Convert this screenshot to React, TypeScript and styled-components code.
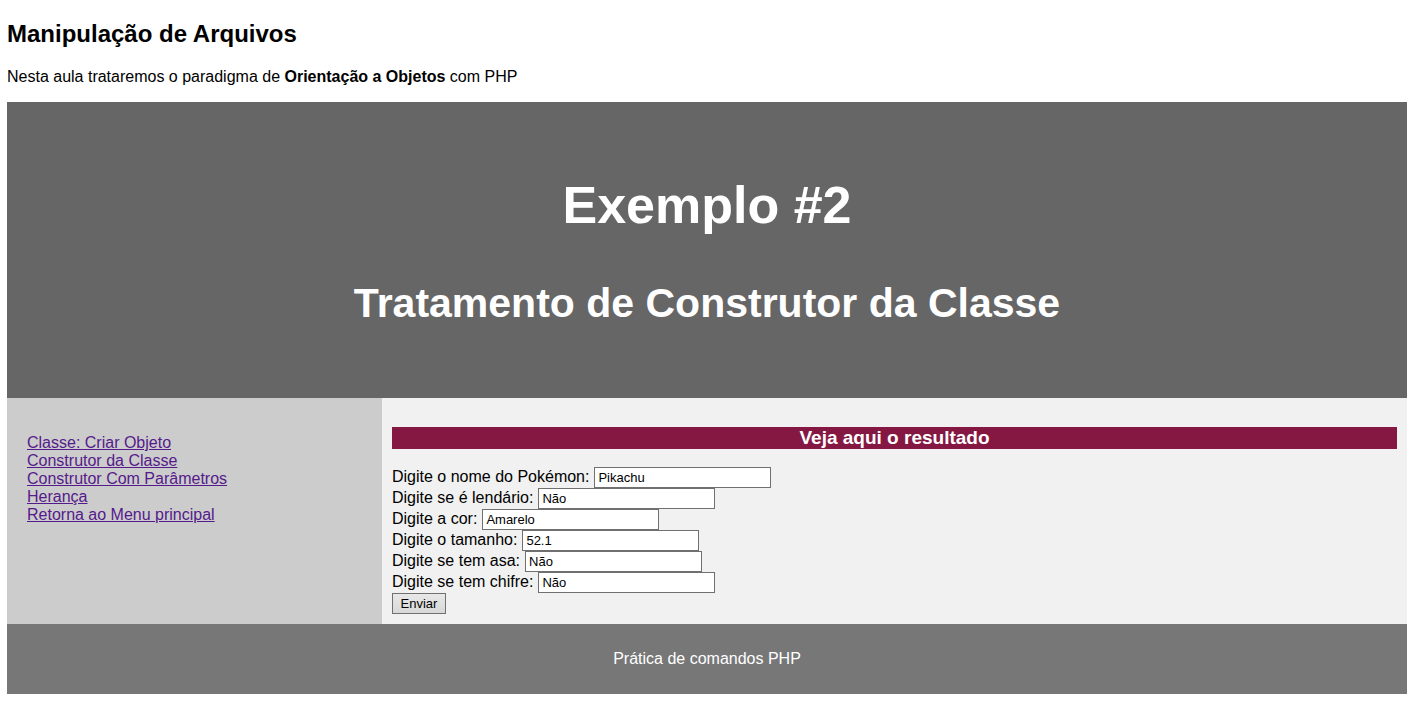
import React from "react";
import styled, { createGlobalStyle } from "styled-components";

const GlobalStyle = createGlobalStyle`
  * { box-sizing: border-box; }
  body {
    margin: 0;
    padding: 0 5px 0 7px;
    background: #fff;
    color: #000;
    font: 16px/18px "Liberation Sans", Arial, Helvetica, sans-serif;
  }
`;

const PageTitle = styled.h2`
  margin: 20px 0;
  font-size: 24px;
  line-height: 28px;
`;

const Intro = styled.p`
  margin: 0 0 16px;
`;

const Banner = styled.header`
  padding: 65px 30px 67px;
  background: #666;
  color: #fff;
  text-align: center;
`;

const BannerTitle = styled.h1`
  margin: 0 0 32px;
  font-size: 52px;
  line-height: 76px;
`;

const BannerSubtitle = styled.h2`
  margin: 0;
  font-size: 41px;
  line-height: 56px;
`;

const Columns = styled.section`
  display: flex;
`;

const Sidebar = styled.nav`
  flex: 0 0 375px;
  padding: 36px 20px 20px;
  background: #ccc;
`;

const LinkList = styled.ul`
  margin: 0;
  padding: 0;
  list-style: none;
`;

const MenuLink = styled.a`
  color: #551a8b;
`;

const Content = styled.article`
  flex: 1;
  min-width: 0;
  padding: 29px 10px 10px;
  background: #f1f1f1;
`;

const ResultTitle = styled.h3`
  margin: 0 0 18px;
  background: #851842;
  color: #fff;
  font-size: 19px;
  line-height: 22px;
  text-align: center;
`;

const Field = styled.div`
  display: flex;
  align-items: flex-start;
  gap: 5px;
  height: 21px;
`;

const FieldLabel = styled.label`
  line-height: 20px;
`;

const TextInput = styled.input`
  width: 177px;
  height: 21px;
  padding: 1px 3px;
  border: 1px solid #707070;
  border-radius: 0;
  background: #fff;
  color: #000;
  font: 13px "Liberation Sans", Arial, sans-serif;
`;

const SubmitButton = styled.button`
  display: block;
  min-width: 54px;
  height: 21px;
  padding: 0 7px;
  border: 1px solid #707070;
  border-radius: 0;
  background: linear-gradient(#e8e8e8, #d8d8d8);
  color: #000;
  font: 13px "Liberation Sans", Arial, sans-serif;
`;

const Footer = styled.footer`
  padding: 26px 10px;
  background: #777;
  color: #fff;
  text-align: center;
`;

const links = [
  "Classe: Criar Objeto",
  "Construtor da Classe",
  "Construtor Com Parâmetros",
  "Herança",
  "Retorna ao Menu principal",
];

const fields = [
  { id: "nome", label: "Digite o nome do Pokémon:", value: "Pikachu" },
  { id: "lendario", label: "Digite se é lendário:", value: "Não" },
  { id: "cor", label: "Digite a cor:", value: "Amarelo" },
  { id: "tamanho", label: "Digite o tamanho:", value: "52.1" },
  { id: "asa", label: "Digite se tem asa:", value: "Não" },
  { id: "chifre", label: "Digite se tem chifre:", value: "Não" },
];

export default function App() {
  return (
    <>
      <GlobalStyle />
      <PageTitle>Manipulação de Arquivos</PageTitle>
      <Intro>
        Nesta aula trataremos o paradigma de <b>Orientação a Objetos</b> com PHP
      </Intro>
      <Banner>
        <BannerTitle>Exemplo #2</BannerTitle>
        <BannerSubtitle>Tratamento de Construtor da Classe</BannerSubtitle>
      </Banner>
      <Columns>
        <Sidebar>
          <LinkList>
            {links.map((text) => (
              <li key={text}>
                <MenuLink href="#">{text}</MenuLink>
              </li>
            ))}
          </LinkList>
        </Sidebar>
        <Content>
          <ResultTitle>Veja aqui o resultado</ResultTitle>
          <form onSubmit={(event) => event.preventDefault()}>
            {fields.map(({ id, label, value }) => (
              <Field key={id}>
                <FieldLabel htmlFor={id}>{label}</FieldLabel>
                <TextInput id={id} name={id} type="text" defaultValue={value} />
              </Field>
            ))}
            <SubmitButton type="submit">Enviar</SubmitButton>
          </form>
        </Content>
      </Columns>
      <Footer>Prática de comandos PHP</Footer>
    </>
  );
}
